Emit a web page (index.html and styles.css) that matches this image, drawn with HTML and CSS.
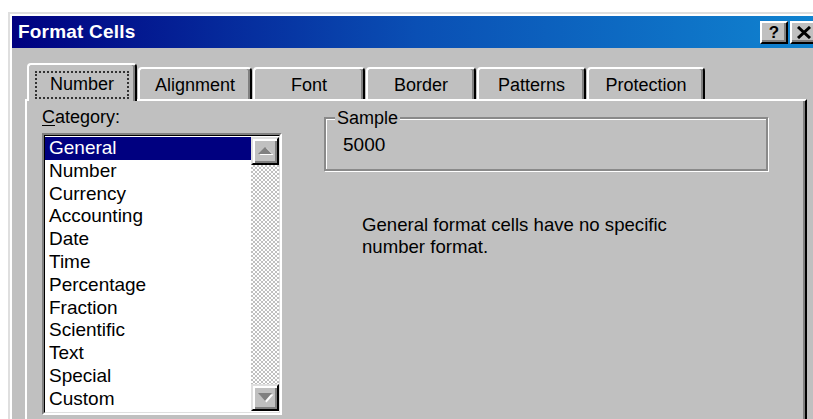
FILE: index.html
```html
<!DOCTYPE html>
<html lang="en">
<head>
<meta charset="utf-8">
<title>Format Cells</title>
<link rel="stylesheet" href="styles.css">
</head>
<body>
<div class="window">
  <div class="titlebar">
    <span class="title">Format Cells</span>
    <div class="caption-buttons">
      <button class="cap-btn cap-help" type="button">?</button>
      <button class="cap-btn cap-close" type="button" aria-label="Close">
        <svg width="16" height="13" viewBox="0 0 16 13"><path d="M2 1 L14 12 M14 1 L2 12" stroke="#000" stroke-width="3" fill="none"/></svg>
      </button>
    </div>
  </div>

  <div class="dialog-body">
    <div class="tabs">
      <div class="tab tab-number active"><span class="focus-label">Number</span></div>
      <div class="tab tab-alignment">Alignment</div>
      <div class="tab tab-font">Font</div>
      <div class="tab tab-border">Border</div>
      <div class="tab tab-patterns">Patterns</div>
      <div class="tab tab-protection">Protection</div>
    </div>

    <div class="panel">
      <div class="col-left">
        <div class="field-label"><u>C</u>ategory:</div>
        <div class="listbox">
          <div class="listbox-inner">
            <ul class="list-items">
              <li class="selected">General</li>
              <li>Number</li>
              <li>Currency</li>
              <li>Accounting</li>
              <li>Date</li>
              <li>Time</li>
              <li>Percentage</li>
              <li>Fraction</li>
              <li>Scientific</li>
              <li>Text</li>
              <li>Special</li>
              <li>Custom</li>
            </ul>
            <div class="scrollbar">
              <div class="sb-btn sb-up">
                <svg width="17" height="10" viewBox="0 0 17 10">
                  <polygon points="2.5,9 9.5,2 16.5,9" fill="#fff"/>
                  <polygon points="1,8 8,1 15,8" fill="#808080"/>
                </svg>
              </div>
              <div class="sb-track"></div>
              <div class="sb-btn sb-down">
                <svg width="17" height="12" viewBox="0 0 17 12">
                  <polygon points="2.5,2.5 16.5,2.5 9.5,10.5" fill="#fff"/>
                  <polygon points="1,1 15,1 8,9" fill="#808080"/>
                </svg>
              </div>
            </div>
          </div>
        </div>
      </div>

      <div class="col-right">
        <fieldset class="sample">
          <legend>Sample</legend>
          <div class="sample-value">5000</div>
        </fieldset>
        <p class="description">General format cells have no specific number format.</p>
      </div>
    </div>
  </div>
</div>
</body>
</html>
```

FILE: styles.css
```css
/* Classic 3D dialog: Format Cells, Number tab */
html, body {
  margin: 0;
  background: #fff;
  overflow: hidden;
}

body {
  font-family: "Liberation Sans", Arial, sans-serif;
  font-size: 18px;
  color: #000;
}

.window {
  box-sizing: border-box;
  width: 816px;
  height: 450px;
  margin: 12px 0 0 8px;
  padding: 2px;
  background: #c0c0c0;
  border: 2px solid;
  border-color: #dfdfdf #000 #000 #dfdfdf;
  box-shadow: inset 2px 2px #fff, inset -2px -2px #808080;
}

/* ---------- caption ---------- */
.titlebar {
  height: 32px;
  display: flex;
  align-items: center;
  justify-content: space-between;
  padding: 0 2px 0 6px;
  background: linear-gradient(90deg, #000080 0%, #0a4fb4 50%, #1084d0 100%);
}

.title {
  color: #fff;
  font-weight: bold;
  font-size: 19px;
  letter-spacing: 0.2px;
}

.caption-buttons {
  display: flex;
  gap: 2px;
}

.cap-btn {
  box-sizing: border-box;
  width: 28px;
  height: 23px;
  padding: 0;
  margin: 0;
  display: flex;
  align-items: center;
  justify-content: center;
  background: #c0c0c0;
  border: 2px solid;
  border-color: #fff #000 #000 #fff;
  box-shadow: inset -2px -2px #808080;
  font-family: "Liberation Sans", Arial, sans-serif;
  font-weight: bold;
  font-size: 17px;
  line-height: 1;
  color: #000;
}

/* ---------- tabs ---------- */
.dialog-body {
  padding: 15px 13px 0 13px;
}

.tabs {
  display: flex;
  align-items: flex-end;
  height: 36px;
  padding-left: 2px;
  gap: 1px;
  position: relative;
  z-index: 1;
}

.tab {
  box-sizing: border-box;
  height: 32px;
  padding-top: 2px;
  display: flex;
  align-items: center;
  justify-content: center;
  background: #c0c0c0;
  border: 2px solid #fff;
  border-bottom: 0;
  border-right-color: #000;
  border-radius: 4px 4px 0 0;
  box-shadow: inset -2px 0 #808080;
  line-height: 22px;
}

.tab.active {
  height: 38px;
  margin-bottom: -2px;
  padding-top: 3px;
}

.focus-label {
  box-sizing: border-box;
  height: 28px;
  padding: 2px 15px;
  outline: 2px dotted #333;
  outline-offset: -2px;
}

.tab-number { width: 110px; }
.tab-alignment { width: 114px; }
.tab-font { width: 112px; }
.tab-border { width: 110px; }
.tab-patterns { width: 109px; }
.tab-protection { width: 118px; }

/* ---------- tab page ---------- */
.panel {
  box-sizing: border-box;
  height: 340px;
  display: flex;
  gap: 42px;
  padding: 5px 0 0 15px;
  border: 2px solid;
  border-color: #fff #000 #000 #fff;
  box-shadow: inset -2px 0 #808080;
}

.col-left {
  width: 240px;
  display: flex;
  flex-direction: column;
}

.field-label {
  line-height: 22px;
  margin-bottom: 5px;
}

.field-label u {
  text-underline-offset: 2px;
}

.listbox {
  box-sizing: border-box;
  height: 282px;
  border: 2px solid;
  border-color: #808080 #fff #fff #808080;
}

.listbox-inner {
  box-sizing: border-box;
  height: 100%;
  display: flex;
  padding: 1px 0 1px 0;
  background: #fff;
  border: 1px solid;
  border-color: #000 #dfdfdf #dfdfdf #000;
}

.list-items {
  flex: 1;
  margin: 0;
  padding: 0;
  list-style: none;
  font-size: 19px;
}

.list-items li {
  line-height: 22.8px;
  padding-left: 4px;
}

.list-items li.selected {
  background: #000080;
  color: #fff;
}

.scrollbar {
  width: 28px;
  display: flex;
  flex-direction: column;
}

.sb-btn {
  box-sizing: border-box;
  height: 28px;
  display: flex;
  align-items: center;
  justify-content: center;
  background: #c0c0c0;
  border: 2px solid;
  border-color: #dfdfdf #000 #000 #dfdfdf;
  box-shadow: inset 2px 2px #fff, inset -2px -2px #808080;
}

.sb-down {
  height: 27px;
}

.sb-track {
  flex: 1;
  background: repeating-conic-gradient(#c0c0c0 0 25%, #fff 0 50%) 0 0 / 4px 4px;
}

/* ---------- sample + description ---------- */
.col-right {
  width: 444px;
  padding-top: 1px;
}

.sample {
  margin: 0;
  padding: 5px 0 13px 17px;
  border: 2px solid #8a8a8a;
  box-shadow: inset 1px 1px #fff, 1px 1px #fff;
}

.sample legend {
  margin-left: -8px;
  padding: 0 2px;
  line-height: 22px;
  background: #c0c0c0;
}

.sample-value {
  line-height: 22px;
  font-size: 19px;
}

.description {
  max-width: 330px;
  margin: 43px 0 0 38px;
  line-height: 22px;
  font-size: 18.6px;
}
```
